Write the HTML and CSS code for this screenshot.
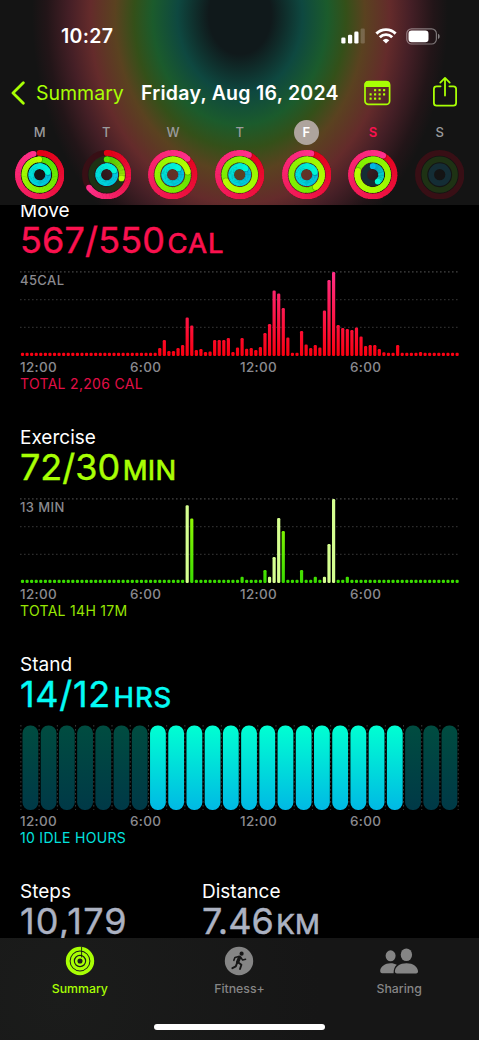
FILE: index.html
```
<!DOCTYPE html>
<html lang="en">
<head>
  <meta charset="UTF-8">
  <meta name="viewport" content="width=device-width, initial-scale=1.0">
  <title>Summary</title>
  <link rel="stylesheet" href="styles.css">
</head>
<body>
  <div class="phone">

    <header class="header">
      <div class="status-bar">
        <span class="time">10:27</span>
        <div class="status-icons">
          <svg width="25" height="16" viewBox="0 0 25 16" fill="#fff">
            <rect x="0.3" y="9.5" width="4.2" height="6" rx="1.3"/>
            <rect x="7" y="6.8" width="4.2" height="8.7" rx="1.3"/>
            <rect x="13.3" y="3.6" width="4.2" height="11.9" rx="1.3"/>
            <rect x="19.6" y="0.4" width="4.2" height="15.1" rx="1.3" opacity="0.2"/>
          </svg>
          <svg width="22" height="16" viewBox="0 0 22 16" fill="none" stroke="#fff" stroke-width="2.9">
            <path d="M1.4 5.6 A13.6 13.6 0 0 1 20.6 5.6"/>
            <path d="M4.8 9.2 A8.8 8.8 0 0 1 17.2 9.2"/>
            <path d="M11 15.6 L7.7 12.2 A4.8 4.8 0 0 1 14.3 12.2 Z" fill="#fff" stroke="none"/>
          </svg>
          <svg class="battery" width="35" height="17" viewBox="0 0 35 17">
            <rect x="0.8" y="0.8" width="29.6" height="15.2" rx="4.8" fill="none" stroke="#fff" stroke-opacity="0.42" stroke-width="1.2"/>
            <rect x="2.5" y="2.6" width="20" height="11.6" rx="3.2" fill="#fff"/>
            <path d="M32 5.8 C34.2 6.6 34.2 10.2 32 11 Z" fill="#fff" fill-opacity="0.45"/>
          </svg>
        </div>
      </div>

      <nav class="nav-bar">
        <svg class="back-icon" width="14" height="24" viewBox="0 0 14 24" fill="none" stroke="#a8ff04" stroke-width="2.8" stroke-linecap="round" stroke-linejoin="round">
          <path d="M12.3 1.8 L2 12 L12.3 22.2"/>
        </svg>
        <span class="back-label">Summary</span>
        <h1 class="title">Friday, Aug 16, 2024</h1>
        <svg class="calendar-icon" width="27" height="26" viewBox="0 0 27 26" fill="#a8ff04">
          <rect x="1" y="1.5" width="24.6" height="22.8" rx="3.4" fill="none" stroke="#a8ff04" stroke-width="1.7"/>
          <path d="M0.6 7 V4.5 Q0.6 1 4.2 1 H22.4 Q26 1 26 4.5 V7 Z"/>
          <g id="calendarDots"></g>
        </svg>
        <svg class="share-icon" width="26" height="32" viewBox="0 0 26 32" fill="none" stroke="#a8ff04" stroke-width="1.8" stroke-linecap="round" stroke-linejoin="round">
          <path d="M8.6 10.3 H4.6 Q1.9 10.3 1.9 13 V27 Q1.9 29.7 4.6 29.7 H21.4 Q24.1 29.7 24.1 27 V13 Q24.1 10.3 21.4 10.3 H17.4"/>
          <path d="M13 19.5 V2.2 M8.3 6.6 L13 1.9 L17.7 6.6"/>
        </svg>
      </nav>

      <div class="week" id="week"></div>
    </header>

    <main class="content">
      <section class="metric move">
        <h2>Move</h2>
        <p class="value">567/550<span class="unit">CAL</span></p>
        <div class="chart">
          <svg id="moveChart" width="440" height="86"></svg>
          <span class="chart-max">45CAL</span>
        </div>
        <div class="axis"><span>12:00</span><span>6:00</span><span>12:00</span><span>6:00</span></div>
        <p class="total">TOTAL 2,206 CAL</p>
      </section>

      <section class="metric exercise">
        <h2>Exercise</h2>
        <p class="value">72/30<span class="unit">MIN</span></p>
        <div class="chart">
          <svg id="exerciseChart" width="440" height="86"></svg>
          <span class="chart-max">13 MIN</span>
        </div>
        <div class="axis"><span>12:00</span><span>6:00</span><span>12:00</span><span>6:00</span></div>
        <p class="total">TOTAL 14H 17M</p>
      </section>

      <section class="metric stand">
        <h2>Stand</h2>
        <p class="value">14/12<span class="unit">HRS</span></p>
        <div class="chart">
          <svg id="standChart" width="440" height="86"></svg>
        </div>
        <div class="axis"><span>12:00</span><span>6:00</span><span>12:00</span><span>6:00</span></div>
        <p class="total">10 IDLE HOURS</p>
      </section>

      <section class="totals">
        <div class="metric steps">
          <h2>Steps</h2>
          <p class="value">10,179</p>
        </div>
        <div class="metric distance">
          <h2>Distance</h2>
          <p class="value">7.46<span class="unit">KM</span></p>
        </div>
      </section>
    </main>

    <footer class="tab-bar">
      <div class="tabs">
        <div class="tab active">
          <svg width="30" height="30" viewBox="0 0 30 30" fill="none" stroke="#a8ff04">
            <circle cx="15" cy="15" r="12.3" stroke-width="3.8"/>
            <circle cx="15" cy="15" r="7.8" stroke-width="3.2"/>
            <circle cx="15" cy="15" r="3.8" stroke-width="2.5"/>
            <path d="M16.6 1 V11.5" stroke="#161b10" stroke-width="0.9"/>
          </svg>
          <span>Summary</span>
        </div>
        <div class="tab">
          <svg width="30" height="30" viewBox="0 0 30 30">
            <circle cx="15" cy="15" r="14.2" fill="#858585"/>
            <circle cx="17.6" cy="7.7" r="2.1" fill="#161616"/>
            <g fill="none" stroke="#161616" stroke-linecap="round" stroke-linejoin="round">
              <path d="M15.6 11.3 L13.6 16.2" stroke-width="3.4"/>
              <path d="M14.8 10.5 L11 11.4 L9.8 14.4" stroke-width="1.5"/>
              <path d="M16.8 11.3 L18.6 14 L21.6 13.2" stroke-width="1.5"/>
              <path d="M14.3 16.6 L17.4 18.8 L16 23" stroke-width="1.9"/>
              <path d="M13 17.2 L11.8 20.4 L8.4 22.2" stroke-width="1.9"/>
            </g>
          </svg>
          <span>Fitness+</span>
        </div>
        <div class="tab">
          <svg width="40" height="30" viewBox="0 0 40 30" fill="#858585">
            <ellipse cx="11.6" cy="9.8" rx="5" ry="5.5"/>
            <path d="M1.2 24.5 C1.6 20.5 6 17.2 11.6 17.2 C14 17.2 16.2 17.8 17.8 18.7 C15.6 20.7 14.6 23.2 14.6 27.2 H3.2 C1.8 27.2 1 26 1.2 24.5 Z"/>
            <ellipse cx="27.4" cy="8.7" rx="5.7" ry="6.3"/>
            <path d="M15.9 25 C16.3 20.7 20.8 17.2 27.5 17.2 C34.2 17.2 38.6 20.7 39 25 C39.2 26.6 38.4 27.4 37 27.4 H18 C16.6 27.4 15.7 26.6 15.9 25 Z"/>
          </svg>
          <span>Sharing</span>
        </div>
      </div>
      <div class="home-indicator"></div>
    </footer>
  </div>

  <script src="script.js"></script>
</body>
</html>
```
FILE: styles.css
```
* {
  margin: 0;
  padding: 0;
  box-sizing: border-box;
}

body {
  font-family: 'Inter', 'Liberation Sans', sans-serif;
  background-color: #fff;
  color: #fff;
}

svg {
  display: block;
  flex-shrink: 0;
}

.phone {
  width: 479px;
  height: 1040px;
  display: flex;
  flex-direction: column;
  background-color: #000;
  overflow: hidden;
}

/* Header */
.header {
  height: 205px;
  flex-shrink: 0;
  background: radial-gradient(ellipse 208px 262px at 240px 15px,
    #10191b 0%, #10191b 15%, #0e4840 30%, #1b5b2c 42%, #345019 51%,
    #5a4220 60%, #642b2b 72%, #451f26 82%, #221518 93%, #141414 100%);
}

.status-bar {
  height: 72px;
  padding: 0 38px 0 61px;
  display: flex;
  justify-content: space-between;
  align-items: center;
}

.time {
  font-size: 19.5px;
  font-weight: 600;
  letter-spacing: 0.3px;
}

.status-icons {
  display: flex;
  align-items: center;
  gap: 9px;
}

.nav-bar {
  height: 42px;
  padding-left: 11px;
  display: flex;
  align-items: center;
}

.back-label {
  width: 105px;
  margin-left: 11px;
  font-size: 19.5px;
  color: #a8ff04;
}

.title {
  width: 223px;
  font-size: 19.5px;
  font-weight: 600;
  letter-spacing: 0.27px;
  white-space: nowrap;
}

.share-icon {
  margin-left: 41px;
  margin-top: -2px;
}

.week {
  display: grid;
  grid-template-columns: repeat(7, 66.7px);
  padding: 6px 0 0 6.3px;
}

.day {
  display: flex;
  flex-direction: column;
  align-items: center;
  gap: 5px;
}

.day-letter {
  width: 25px;
  height: 25px;
  line-height: 25px;
  border-radius: 50%;
  text-align: center;
  font-size: 13px;
  font-weight: 500;
  color: #9b9b9d;
}

.day-letter.selected {
  background-color: #aea49d;
  color: #fff;
  font-weight: 600;
}

.day-letter.today {
  color: #fa114f;
  font-weight: 600;
}

/* Metrics */
.content {
  flex: 1;
  overflow: hidden;
  padding-left: 20px;
}

.metric {
  height: 227px;
}

.move {
  margin-top: -6px;
}

.metric h2 {
  font-size: 19px;
  font-weight: 400;
  line-height: 24px;
}

.value {
  font-size: 36px;
  line-height: 34px;
  -webkit-text-stroke: 0.4px currentColor;
  white-space: nowrap;
}

.unit {
  margin-left: 2.5px;
  font-size: 27.5px;
  letter-spacing: 0.2px;
  -webkit-text-stroke: 0.7px currentColor;
}

.move .value {
  letter-spacing: 0.15px;
}

.move .unit {
  letter-spacing: 0.9px;
}

.stand .value {
  letter-spacing: 0.7px;
}

.stand .unit {
  letter-spacing: 1px;
}

.steps .value {
  letter-spacing: 1.2px;
}

.move .value,
.move .total {
  color: #fa114f;
}

.exercise .value,
.exercise .total {
  color: #a8ff04;
}

.stand .value,
.stand .total {
  color: #04fbf5;
}

.chart {
  position: relative;
  margin-top: 11px;
}

.chart-max {
  position: absolute;
  top: 1px;
  left: 0;
  font-size: 13px;
  font-weight: 500;
  line-height: 16px;
  letter-spacing: 0.4px;
  color: #8a8a8f;
}

.axis {
  display: grid;
  grid-template-columns: repeat(4, 110px);
  margin-top: 2px;
  font-size: 13.5px;
  font-weight: 500;
  line-height: 17px;
  letter-spacing: 0.3px;
  color: #8a8a8f;
}

.total {
  font-size: 14px;
  line-height: 16px;
  letter-spacing: 0.3px;
}

.move .total,
.exercise .total,
.stand .total {
  opacity: 0.9;
}

.totals {
  display: grid;
  grid-template-columns: 182px 200px;
}

.totals .value {
  color: #acb2c2;
}

/* Tab bar */
.tab-bar {
  height: 102px;
  flex-shrink: 0;
  display: flex;
  flex-direction: column;
  justify-content: space-between;
  align-items: center;
  padding: 8px 0 10px;
  background: radial-gradient(circle 260px at 60px 60px, #1b1c1b, #161616);
}

.tabs {
  width: 100%;
  display: grid;
  grid-template-columns: repeat(3, 1fr);
}

.tab {
  display: flex;
  flex-direction: column;
  align-items: center;
  gap: 5px;
  font-size: 12.3px;
  font-weight: 500;
  line-height: 16px;
  color: #858585;
}

.tab.active {
  color: #a8ff04;
}

.home-indicator {
  width: 171px;
  height: 6px;
  border-radius: 3px;
  background-color: #fff;
}
```
FILE: script.js
```
const SVG_NS = 'http://www.w3.org/2000/svg';

// [move, exercise, stand] progress for each day, above 1 the ring laps itself
const days = [
  { letter: 'M', rings: [0.955, 0.995, 1.2] },
  { letter: 'T', rings: [0.65, 0.29, 1.17] },
  { letter: 'W', rings: [1.12, 1.22, 1.12] },
  { letter: 'T', rings: [1.07, 1.68, 1.12] },
  { letter: 'F', rings: [1.035, 1.4, 1.2], state: 'selected' },
  { letter: 'S', rings: [1.08, 1.79, 0.4], state: 'today' },
  { letter: 'S', rings: [0, 0, 0] }
];

const ringStyles = [
  { r: 21.8, from: [226, 0, 20], to: [255, 48, 140], track: '#380f15' },
  { r: 15.3, from: [80, 225, 0], to: [184, 255, 0], track: '#1e3214' },
  { r: 8.5, from: [0, 180, 228], to: [0, 248, 212], track: '#142d35' }
];

// quarter hour values, in pixels of bar height
const moveBars = new Array(96).fill(3.2);
[8, 16, 5, 5, 8, 11, 38.5, 30.5, 6, 7, 4, 4.5, 16, 16, 16, 18, 4, 8.5,
  18, 7.3, 8, 6, 9, 23, 32, 65.5, 62.5, 48, 18.5, 3.2, 3.2, 25, 11.5, 8, 11, 8.5,
  45.5, 76, 84, 31, 28, 27, 26, 28.5, 19.5, 10, 11, 11, 7, 3.7, 3.2, 3.2, 11
].forEach((h, i) => moveBars[30 + i] = h);
moveBars[87] = 3.9;

const exerciseBars = new Array(96).fill(3.2);
const exerciseValues = {
  36: 77.7, 37: 64.5, 48: 6.3, 53: 13, 54: 6.3, 55: 26, 56: 65, 57: 52,
  61: 13, 64: 6.3, 66: 6.3, 67: 39, 68: 84, 71: 6.3
};
for (const i in exerciseValues) exerciseBars[i] = exerciseValues[i];
const workoutBars = [36, 54, 55, 56, 66, 67, 68];

function add(parent, name, attrs) {
  const el = document.createElementNS(SVG_NS, name);
  for (const key in attrs) el.setAttribute(key, attrs[key]);
  parent.appendChild(el);
  return el;
}

function drawRing(svg, style, progress) {
  const c = 24.7;
  const width = 5.7;
  add(svg, 'circle', { cx: c, cy: c, r: style.r, fill: 'none', stroke: style.track, 'stroke-width': width });
  if (!progress) return;

  const point = t => {
    const a = t * 2 * Math.PI;
    return [c + style.r * Math.sin(a), c - style.r * Math.cos(a)];
  };
  const color = t => 'rgb(' + style.from.map((v, i) => Math.round(v + (style.to[i] - v) * t)) + ')';
  const steps = 60;

  const start = point(0);
  add(svg, 'circle', { cx: start[0], cy: start[1], r: width / 2, fill: color(0) });
  for (let i = 0; i < steps; i++) {
    const a = point(i / steps * progress);
    const b = point(Math.min((i + 1.3) / steps, 1) * progress);
    add(svg, 'path', {
      d: `M${a[0]} ${a[1]} A${style.r} ${style.r} 0 0 1 ${b[0]} ${b[1]}`,
      fill: 'none', stroke: color(i / steps), 'stroke-width': width
    });
  }
  // shadow ahead of the head, then the head itself
  const ahead = point(progress + 0.7 / (2 * Math.PI * style.r));
  const end = point(progress);
  if (progress > 0.98) add(svg, 'circle', { cx: ahead[0], cy: ahead[1], r: width / 2, fill: '#000', opacity: 0.25 });
  add(svg, 'circle', { cx: end[0], cy: end[1], r: width / 2, fill: color(1) });
}

function drawWeek() {
  const week = document.getElementById('week');
  days.forEach(day => {
    const cell = document.createElement('div');
    cell.className = 'day';
    const letter = document.createElement('span');
    letter.className = 'day-letter ' + (day.state || '');
    letter.textContent = day.letter;
    cell.appendChild(letter);
    const svg = add(cell, 'svg', { width: 49.4, height: 49.4 });
    day.rings.forEach((p, i) => drawRing(svg, ringStyles[i], p));
    week.appendChild(cell);
  });
}

function addGradient(svg, id, top, bottom) {
  const g = add(svg, 'linearGradient', { id: id, gradientUnits: 'userSpaceOnUse', x1: 0, y1: 1, x2: 0, y2: 85 });
  add(g, 'stop', { offset: 0, 'stop-color': top });
  add(g, 'stop', { offset: 1, 'stop-color': bottom });
}

function drawBars(id, bars, fill) {
  const svg = document.getElementById(id);
  [[0.9, '#444'], [28.6, '#2c2c2c'], [56.4, '#2c2c2c']].forEach(([y, stroke]) => {
    add(svg, 'line', { x1: 0, x2: 440, y1: y, y2: y, stroke: stroke, 'stroke-width': 1.2, 'stroke-dasharray': '1.6 2.4' });
  });
  bars.forEach((h, i) => {
    add(svg, 'rect', { x: 0.9 + i * 4.575, y: 85 - h, width: 3.2, height: h, rx: 1.2, fill: fill(i) });
  });
}

function drawStand() {
  const svg = document.getElementById('standChart');
  addGradient(svg, 'standOn', '#00ffd2', '#00b9e4');
  addGradient(svg, 'standOff', '#004c40', '#003947');
  for (let i = 0; i <= 24; i++) {
    const x = 0.9 + i * 18.22;
    add(svg, 'line', { x1: x, x2: x, y1: 0, y2: 85, stroke: '#3a3a3a', 'stroke-width': 1, 'stroke-dasharray': '1.6 2.4' });
  }
  for (let i = 0; i < 24; i++) {
    const on = i >= 7 && i <= 20;
    add(svg, 'rect', { x: 2.5 + i * 18.22, y: 0.6, width: 15.8, height: 84.4, rx: 7.5, fill: on ? 'url(#standOn)' : 'url(#standOff)' });
  }
}

function drawCalendarDots() {
  const dots = document.getElementById('calendarDots');
  for (let row = 0; row < 3; row++) {
    for (let col = 0; col < 4; col++) {
      // the month starts on the second column and ends on the third
      if ((row === 0 && col === 0) || (row === 2 && col === 3)) continue;
      add(dots, 'rect', { x: 5.5 + col * 4.5, y: 9.1 + row * 4.2, width: 2.2, height: 2.2, rx: 0.5 });
    }
  }
}

addGradient(document.getElementById('moveChart'), 'moveFill', '#ff2f86', '#fa0010');
addGradient(document.getElementById('exerciseChart'), 'exerciseFill', '#a8ff04', '#38dc00');
addGradient(document.getElementById('exerciseChart'), 'workoutFill', '#d5ff90', '#d5ff90');

drawWeek();
drawCalendarDots();
drawBars('moveChart', moveBars, () => 'url(#moveFill)');
drawBars('exerciseChart', exerciseBars, i => workoutBars.includes(i) ? 'url(#workoutFill)' : 'url(#exerciseFill)');
drawStand();
```
